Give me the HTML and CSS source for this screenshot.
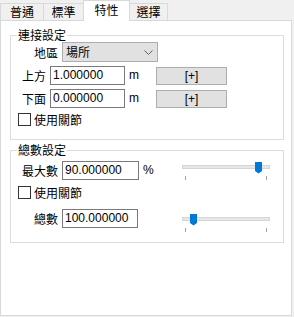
FILE: index.html
```html
<!DOCTYPE html>
<html>
<head>
<meta charset="utf-8">
<link rel="stylesheet" href="styles.css">
</head>
<body>
<div class="window">
  <div class="tabs">
    <div class="tab t1">普通</div>
    <div class="tab t2">標準</div>
    <div class="tab sel">特性</div>
    <div class="tab t4">選擇</div>
  </div>
  <div class="panel">
    <div class="group g1">
      <div class="legend">連接設定</div>
      <div class="row">
        <span class="label lw47">地區</span>
        <div class="select"><span>場所</span>
          <svg class="chev" width="9" height="5" viewBox="0 0 9 5"><polyline points="0.5,0.5 4.5,4.5 8.5,0.5" fill="none" stroke="#606060" stroke-width="1"/></svg>
        </div>
      </div>
      <div class="row mt4">
        <span class="label lw35">上方</span>
        <div class="input w75">1.000000</div>
        <span class="unit um">m</span>
        <div class="btn">[+]</div>
      </div>
      <div class="row mt4">
        <span class="label lw35">下面</span>
        <div class="input w75">0.000000</div>
        <span class="unit um">m</span>
        <div class="btn">[+]</div>
      </div>
      <div class="check mt5"><span class="box"></span><span>使用關節</span></div>
    </div>
    <div class="group g2">
      <div class="legend">總數設定</div>
      <div class="row mt4 top">
        <span class="label lw47">最大數</span>
        <div class="input w77">90.000000</div>
        <span class="unit">%</span>
        <div class="slider">
          <div class="track"></div>
          <svg class="thumb" style="left:73px" width="8" height="12" viewBox="0 0 8 12"><path d="M0 0H7V9L3.5 11.5L0 9Z" fill="#0078d7"/></svg>
          <span class="tick tl"></span><span class="tick tr"></span>
        </div>
      </div>
      <div class="check mt5"><span class="box"></span><span>使用關節</span></div>
      <div class="row mt10 top">
        <span class="label lw47">總數</span>
        <div class="input w76">100.000000</div>
        <div class="slider s2">
          <div class="track"></div>
          <svg class="thumb" style="left:8px" width="8" height="12" viewBox="0 0 8 12"><path d="M0 0H7V9L3.5 11.5L0 9Z" fill="#0078d7"/></svg>
          <span class="tick tl"></span><span class="tick tr"></span>
        </div>
      </div>
    </div>
  </div>
</div>
</body>
</html>
```
FILE: styles.css
```css
* { box-sizing: border-box; }
html, body { margin: 0; padding: 0; }
body {
  background: #f0f0f0;
  width: 294px;
  height: 317px;
  overflow: hidden;
  font-family: "Liberation Sans", "Noto Sans CJK TC", sans-serif;
  font-size: 12px;
  color: #000;
}
.window { width: 294px; height: 317px; }
.tabs {
  display: flex;
  align-items: flex-end;
  height: 20px;
}
.tab {
  height: 17px;
  border: 1px solid #d9d9d9;
  border-bottom: none;
  background: #f0f0f0;
  text-align: center;
  line-height: 15px;
  font-size: 12px;
  font-family: "Noto Sans CJK TC", sans-serif;
}
.t1 { width: 44px; }
.t2 { width: 41px; margin-left: -1px; }
.sel {
  width: 47px;
  margin-left: -1px;
  height: 21px;
  margin-bottom: -1px;
  background: #fff;
  position: relative;
  z-index: 1;
  line-height: 17px;
}
.t4 { width: 39px; margin-left: -1px; }
.panel {
  width: 292px;
  height: 296px;
  background: #fff;
  border: 1px solid #d9d9d9;
  padding-top: 14px;
}
.group {
  margin: 0 7px 0 9px;
  border: 1px solid #dcdcdc;
  padding: 0 13px 13px 0;
}
.g2 { margin-top: 10px; padding-bottom: 9px; }
.legend {
  width: fit-content;
  margin-top: -8px;
  margin-left: 6px;
  padding: 0 1px;
  background: #fff;
  line-height: 14px;
  height: 14px;
  font-family: "Noto Sans CJK TC", sans-serif;
}
.row { display: flex; align-items: center; }
.row.top { align-items: flex-start; }
.mt4 { margin-top: 4px; }
.mt5 { margin-top: 5px; }
.mt10 { margin-top: 10px; }
.label {
  text-align: right;
  margin-right: 4px;
  line-height: 19px;
  height: 19px;
  font-family: "Noto Sans CJK TC", sans-serif;
}
.lw47 { width: 47px; }
.lw35 { width: 35px; }
.select {
  width: 96px;
  height: 20px;
  background: #e1e1e1;
  border: 1px solid #adadad;
  display: flex;
  align-items: center;
  justify-content: space-between;
  padding: 0 4px 0 3px;
  font-family: "Noto Sans CJK TC", sans-serif;
  line-height: 18px;
}
.chev { display: block; margin-top: 1px; }
.input {
  height: 19px;
  border: 1px solid #7a7a7a;
  background: #fff;
  padding-left: 2px;
  line-height: 17px;
}
.w75 { width: 75px; }
.w76 { width: 76px; }
.w77 { width: 77px; }
.unit { padding-left: 4px; line-height: 19px; }
.um { width: 31px; }
.btn {
  width: 71px;
  height: 18px;
  background: #e1e1e1;
  border: 1px solid #adadad;
  text-align: center;
  line-height: 16px;
  margin-top: 1px;
}
.check {
  display: flex;
  align-items: center;
  padding-left: 7px;
  height: 13px;
  font-family: "Noto Sans CJK TC", sans-serif;
  line-height: 13px;
}
.box {
  width: 13px;
  height: 13px;
  border: 1px solid #333;
  background: #fff;
  margin-right: 3px;
}
.slider {
  margin-left: auto;
  width: 88px;
  height: 20px;
  position: relative;
}
.s2 { margin-top: 4px; }
.track {
  position: absolute;
  left: 0;
  right: 0;
  top: 4px;
  height: 4px;
  background: #e7e7e7;
  border: 1px solid #d6d6d6;
}
.thumb { position: absolute; top: 1px; }
.tick {
  position: absolute;
  top: 15px;
  width: 1px;
  height: 4px;
  background: #a0a0a0;
}
.tl { left: 3px; }
.tr { left: 84px; }
```
